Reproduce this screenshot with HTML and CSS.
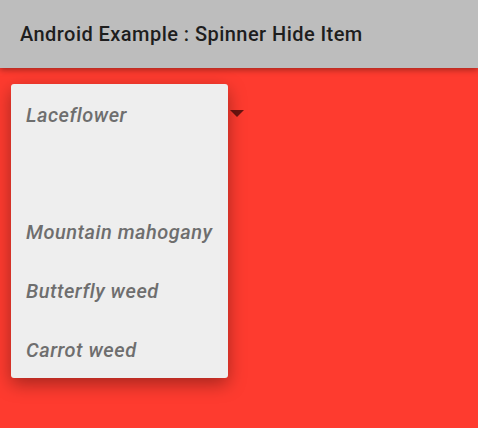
FILE: index.html
```html
<!DOCTYPE html>
<html lang="en">
<head>
  <meta charset="UTF-8">
  <title>Spinner Hide Item</title>
  <link rel="stylesheet" href="styles.css">
</head>
<body>

<div class="toolbar">
  <h1>Android Example : Spinner Hide Item</h1>
</div>

<div class="content">
  <div class="spinner">
    <span class="arrow"></span>
  </div>

  <ul class="dropdown">
    <li>Laceflower</li>
    <li></li>
    <li>Mountain mahogany</li>
    <li>Butterfly weed</li>
    <li>Carrot weed</li>
  </ul>
</div>

</body>
</html>
```

FILE: styles.css
```css
body {
  margin: 0;
  padding: 0;
  width: 478px;
  height: 428px;
  overflow: hidden;
  background: #fe3b2f;
  font-family: Roboto, "Noto Sans", sans-serif;
}

.toolbar {
  height: 68px;
  background-color: #bdbdbd;
  display: flex;
  align-items: center;
  padding: 0 20px;
  box-shadow: 0 2px 6px rgba(0, 0, 0, 0.35);
  position: relative;
  z-index: 1;
}

.toolbar h1 {
  margin: 0;
  font-size: 20px;
  font-weight: 500;
  letter-spacing: 0.45px;
  color: #1e1e1e;
}

.content {
  position: relative;
  height: 360px;
}

.spinner {
  height: 60px;
  width: 246px;
  position: relative;
}

.arrow {
  position: absolute;
  left: 230px;
  top: 42px;
  width: 0;
  height: 0;
  border-left: 7px solid transparent;
  border-right: 7px solid transparent;
  border-top: 7px solid #6b1410;
}

.dropdown {
  position: absolute;
  left: 11px;
  top: 16px;
  width: 217px;
  margin: 0;
  padding: 0;
  list-style: none;
  background-color: #eeeeee;
  border-radius: 3px;
  box-shadow: 0 6px 18px rgba(0, 0, 0, 0.35);
  z-index: 2;
}

.dropdown li {
  height: 58.8px;
  box-sizing: border-box;
  padding: 3px 15px 0;
  display: flex;
  align-items: center;
  font-size: 20px;
  font-weight: 500;
  font-style: italic;
  letter-spacing: 0.5px;
  color: #6e6e6e;
  white-space: nowrap;
}
```
